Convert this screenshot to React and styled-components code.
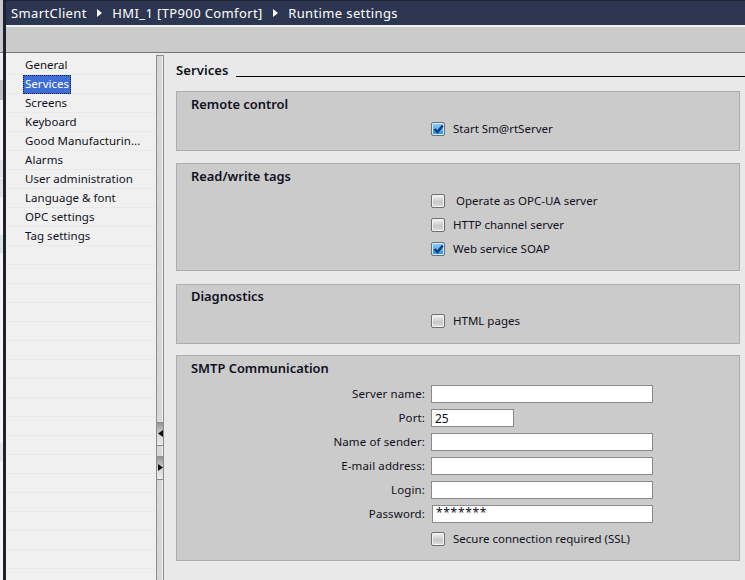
import React from "react";
import styled, { createGlobalStyle } from "styled-components";

const Global = createGlobalStyle`
  html, body { margin: 0; padding: 0; height: 100%; background: #e9e9e9; overflow: hidden; }
  #root { height: 580px; }
  * { box-sizing: border-box; }
  body { font-family: "Noto Sans", "DejaVu Sans", sans-serif; font-size: 12px; color: #101020; }
`;

const Page = styled.div`display: flex; width: 745px; height: 580px; overflow: hidden;`;
const Strip = styled.div`display: flex; flex-direction: column; width: 3px; flex: none;`;
const StripPiece = styled.div`height: ${p => p.$h}px; background: ${p => p.$c}; flex: none;`;
const Edge = styled.div`width: 3px; flex: none; background: #1c2233;`;
const Window = styled.div`flex: 1; min-width: 0; display: flex; flex-direction: column;`;
const TitleBar = styled.header`
  height: 25px; flex: none; background: #2d3650; border-top: 1px solid #1f2535;
  display: flex; align-items: center; padding: 0 0 1px 5px; color: #fff;
  font-size: 13px; letter-spacing: 0.38px; white-space: nowrap;
`;
const Crumb = styled.span``;
const Sep = styled.svg`width: 5px; height: 8px; margin: 0 10px 0 10.5px; flex: none; fill: #fff;`;
const Gap = styled.div`height: 2px; background: #f2f2f2; flex: none;`;
const Toolbar = styled.div`height: 26px; flex: none; background: #cbcbcb; border-bottom: 1px solid #777;`;
const Body = styled.div`flex: 1; min-height: 0; display: flex;`;
const Side = styled.nav`width: 150px; flex: none; background: #f0f0f0; padding: 3px 0 0 1px; overflow: hidden;`;
const Row = styled.div`
  height: 19px; border-bottom: 1px solid #e9e9e9; padding-left: 16px; display: flex; align-items: center;
  font-size: 11.5px; line-height: 17px; white-space: nowrap; letter-spacing: 0.03px;
`;
const RowLabel = styled.span`
  padding: 0 2px; height: 19px; line-height: 18px; margin-bottom: ${p => p.$sel ? "-1px" : "0"};
  ${p => p.$sel && `background:#3f6dd6; color:#fff; outline:1px dotted #102050; outline-offset:-1px;`}
`;
const Splitter = styled.div`
  width: 8px; flex: none; background: #d8d8d8; margin-top: 2px;
  border-left: 1px solid #8c8c8c; border-top: 1px solid #8c8c8c; box-shadow: inset -1px 0 0 #f4f4f4;
  border-right: 1px solid #8c8c8c; display: flex; flex-direction: column;
`;
const Handle = styled.div`
  height: 24px; margin-top: ${p => p.$top}px; flex: none; display: flex; align-items: center;
  background: linear-gradient(#8e8e8e, #d8d8d8 55%, #ececec); border-bottom: 1px solid #888;
`;
const Arrow = styled.svg`width: 5px; height: 7px; fill: #111; margin-left: 1px;`;
const Main = styled.main`flex: 1; min-width: 0; padding: 9px 5px 0 12px; background: #e9e9e9; display: flex; flex-direction: column;`;
const Heading = styled.div`display: flex; align-items: flex-end; height: 16px; margin-bottom: 13px; flex: none;`;
const HeadingText = styled.span`font-size: 13px; font-weight: 600; line-height: 16px; letter-spacing: 0.1px;`;
const HeadingRule = styled.div`flex: 1; margin: 0 -5px 0 7px; height: 1px; background: #000; position: relative; top: -1px;`;
const Panel = styled.section`
  height: ${p => p.$h}px; margin-bottom: ${p => p.$mb}px; flex: none;
  background: #cbcbcb; border: 1px solid #adadad; padding: ${p => p.$pt || 3}px 0 0 14px;
`;
const PanelTitle = styled.h2`margin: 0; font-size: 12.9px; line-height: 18px; font-weight: 600; letter-spacing: 0;`;
const Options = styled.div`display: flex; flex-direction: column; gap: 10px; padding: ${p => p.$pt}px 0 0 240px;`;
const Option = styled.label`display: flex; align-items: center; height: 14px; font-size: 11.5px; letter-spacing: 0; white-space: nowrap;`;
const OptionText = styled.span`line-height: 14px; margin-bottom: 1px;`;
const Box = styled.span`
  width: 14px; height: 14px; flex: none; border-radius: 2px; border: 1px solid #6f6f6f;
  margin-right: ${p => p.$mr || 8}px; display: flex; align-items: center; justify-content: center;
  background: ${p => p.$on ? "linear-gradient(#8fd4f9, #1f8fe6)" : "linear-gradient(#f6f6f6, #c6c6c6 60%, #e4e4e4)"};
  box-shadow: inset 0 0 0 1px ${p => p.$on ? "#cfeeff" : "#f4f4f4"};
`;
const Check = styled.svg`width: 11px; height: 10px; fill: none; stroke: #123a78; stroke-width: 2.4;`;
const Form = styled.div`
  display: grid; grid-template-columns: 234px 222px; column-gap: 6px; row-gap: 6px; padding-top: 8px; align-items: center;
`;
const Label = styled.label`text-align: right; font-size: 11.5px; letter-spacing: 0.12px; white-space: nowrap; padding-bottom: 2px;`;
const Input = styled.div`
  height: 18px; width: ${p => p.$w || 222}px; background: #fff; border: 1px solid #8a8a8a;
  margin-left: ${p => p.$ml || 0}px;
  font-size: 12px; line-height: ${p => p.$lh || 17}px; padding-left: 3px; letter-spacing: ${p => p.$sp || 0}px;
`;
const Secure = styled.div`padding: 9px 0 0 240px;`;

const Mark = ({ on, mr, text }) => (
  <Option>
    <Box $on={on} $mr={mr}>
      {on && <Check viewBox="0 0 11 10"><path d="M1.5 5 L4.5 8 L9.8 1.5" /></Check>}
    </Box>
    <OptionText>{text}</OptionText>
  </Option>
);

const nav = ["General","Services","Screens","Keyboard","Good Manufacturin...","Alarms","User administration","Language & font","OPC settings","Tag settings",...Array(18).fill("")];
const strip = [[52,"#c9c9c9"],[1,"#777"],[27,"#ececec"],[20,"#bdbdbd"],[60,"#f2f2f2"],[18,"#e2e2e2"],[1,"#f7f7f7"],[18,"#e2e2e2"],[38,"#f4f4f4"],[18,"#dfe3e6"],[190,"#f4f4f4"],[18,"#e6e6e6"],[119,"#f4f4f4"]];
const fields = [
  { label: "Server name:" },
  { label: "Port:", value: "25", w: 83 },
  { label: "Name of sender:" },
  { label: "E-mail address:" },
  { label: "Login:" },
  { label: "Password:", value: "*******", w: 221, ml: 1, sp: 0.7, lh: 14 },
];

export default function App() {
  return (
    <Page>
      <Global />
      <Strip>{strip.map(([h,c],i) => <StripPiece key={i} $h={h} $c={c} />)}</Strip>
      <Edge />
      <Window>
        <TitleBar>
          <Crumb>SmartClient</Crumb>
          <Sep viewBox="0 0 5 8"><path d="M0 0 L5 4 L0 8 Z" /></Sep>
          <Crumb>HMI_1 [TP900 Comfort]</Crumb>
          <Sep viewBox="0 0 5 8"><path d="M0 0 L5 4 L0 8 Z" /></Sep>
          <Crumb>Runtime settings</Crumb>
        </TitleBar>
        <Gap />
        <Toolbar />
        <Body>
          <Side>
            {nav.map((n,i) => <Row key={i}><RowLabel $sel={i===1}>{n}</RowLabel></Row>)}
          </Side>
          <Splitter>
            <Handle $top={366}><Arrow viewBox="0 0 5 7"><path d="M5 0 L0 3.5 L5 7 Z" /></Arrow></Handle>
            <Handle $top={10}><Arrow viewBox="0 0 5 7"><path d="M0 0 L5 3.5 L0 7 Z" /></Arrow></Handle>
          </Splitter>
          <Main>
            <Heading><HeadingText>Services</HeadingText><HeadingRule /></Heading>
            <Panel $h={60} $mb={12}>
              <PanelTitle>Remote control</PanelTitle>
              <Options $pt={9}><Mark on text="Start Sm@rtServer" /></Options>
            </Panel>
            <Panel $h={108} $mb={13}>
              <PanelTitle>Read/write tags</PanelTitle>
              <Options $pt={9}>
                <Mark mr={11} text="Operate as OPC-UA server" />
                <Mark text="HTTP channel server" />
                <Mark on text="Web service SOAP" />
              </Options>
            </Panel>
            <Panel $h={60} $mb={11} $pt={2}>
              <PanelTitle>Diagnostics</PanelTitle>
              <Options $pt={9}><Mark text="HTML pages" /></Options>
            </Panel>
            <Panel $h={206} $mb={0}>
              <PanelTitle>SMTP Communication</PanelTitle>
              <Form>
                {fields.map(f => (
                  <React.Fragment key={f.label}>
                    <Label>{f.label}</Label>
                    <Input $w={f.w} $ml={f.ml} $sp={f.sp} $lh={f.lh}>{f.value}</Input>
                  </React.Fragment>
                ))}
              </Form>
              <Secure><Mark text="Secure connection required (SSL)" /></Secure>
            </Panel>
          </Main>
        </Body>
      </Window>
    </Page>
  );
}
